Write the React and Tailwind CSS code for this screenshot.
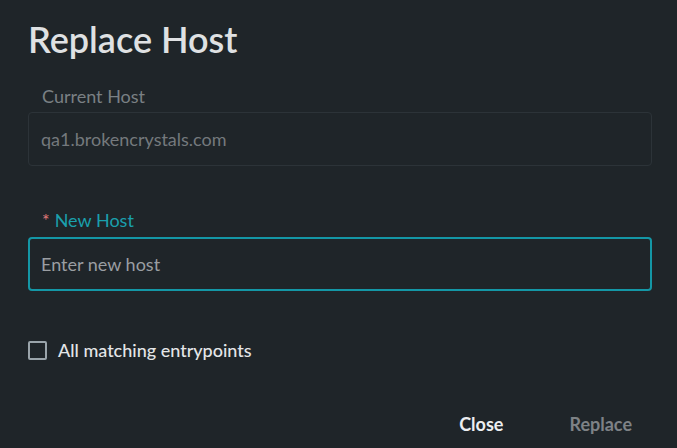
import React, { useState } from 'react';

const App = () => {
    const [host, setHost] = useState('');
    const [allMatching, setAllMatching] = useState(false);

    return (
        <div className="w-[677px] h-[448px] bg-[#1f2529] flex flex-col font-['Lato',sans-serif]">
            <h1 className="pl-[28px] pt-[17px] text-[36px] leading-[44px] font-semibold text-[#dfe1e3]">Replace Host</h1>

            <div className="pl-[28px] pr-[25px] mt-[25px]">
                <label className="block pl-[14px] text-[18px] leading-[20px] text-[#7a8084]">Current Host</label>
                <div className="mt-[6px] h-[54px] border border-[#2c3338] rounded-[4px] flex items-center px-[12px] text-[18px] text-[#74797d]">
                    qa1.brokencrystals.com
                </div>
            </div>

            <div className="pl-[28px] pr-[25px] mt-[44px]">
                <label className="block pl-[14px] text-[18px] leading-[20px] text-[#1aa0ad]">
                    <span className="text-[#e07a7a] mr-[5px]">*</span>New Host
                </label>
                <input
                    className="mt-[7px] w-full h-[54px] border-2 border-[#1497a6] rounded-[4px] bg-transparent px-[11px] text-[18px] text-[#c9cccf] placeholder:text-[#9a9ea2] outline-none"
                    placeholder="Enter new host"
                    value={host}
                    onChange={(e) => setHost(e.target.value)}
                />
            </div>

            <label className="px-[28px] mt-[49px] flex items-center gap-[11px] cursor-pointer">
                <span
                    className="w-[19px] h-[19px] border-2 border-[#9aa4aa] rounded-[2px]"
                    onClick={() => setAllMatching(!allMatching)}
                ></span>
                <span className="text-[18px] leading-[20px] font-medium text-[#e4e6e8]">All matching entrypoints</span>
            </label>

            <div className="mt-auto mb-[10px] flex justify-end pr-[45px] gap-[66px]">
                <button className="text-[18px] font-bold text-[#eceef0]">Close</button>
                <button className="text-[18px] font-bold text-[#7e8286]" disabled={!host}>Replace</button>
            </div>
        </div>
    );
};

export default App;
